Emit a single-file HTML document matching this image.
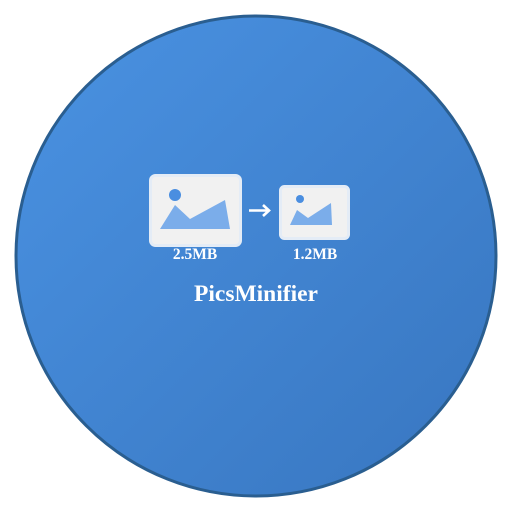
<!DOCTYPE html><html><head><style>body{margin:0;width:512px;height:512px;background:#fff;overflow:hidden}</style></head><body>
<svg width="512" height="512" viewBox="0 0 512 512" xmlns="http://www.w3.org/2000/svg">
<defs><linearGradient id="g" x1="0" y1="0" x2="1" y2="1"><stop offset="0" stop-color="#4a92e2"/><stop offset="1" stop-color="#3876c0"/></linearGradient></defs>
<circle cx="256" cy="256" r="240" fill="url(#g)" stroke="#2a5e90" stroke-width="3"/>
<rect x="150.5" y="175.5" width="90" height="70" rx="5" fill="#f1f1f1" stroke="#e4ecf6" stroke-width="3"/>
<circle cx="175" cy="195" r="6" fill="#4a8ee0"/>
<polygon points="160,229 175,205 190,219 225,200 230,229" fill="#7badea"/>
<rect x="280.5" y="186.5" width="68" height="52" rx="4" fill="#f1f1f1" stroke="#e4ecf6" stroke-width="3"/>
<circle cx="300" cy="199" r="4" fill="#4a8ee0"/>
<polygon points="290,225 297,210 308,218 331,203 332,225" fill="#7badea"/>
<path d="M249 210.5H269M263 205l6 5.5-6 5.5" fill="none" stroke="#fff" stroke-width="2.6"/>
<g font-family="Liberation Serif,serif" font-weight="bold" fill="#fff" text-anchor="middle">
<text x="195" y="259" font-size="15.5">2.5MB</text>
<text x="315" y="259" font-size="15.5">1.2MB</text>
<text x="256" y="301" font-size="23.5">PicsMinifier</text>
</g>
</svg>
</body></html>
